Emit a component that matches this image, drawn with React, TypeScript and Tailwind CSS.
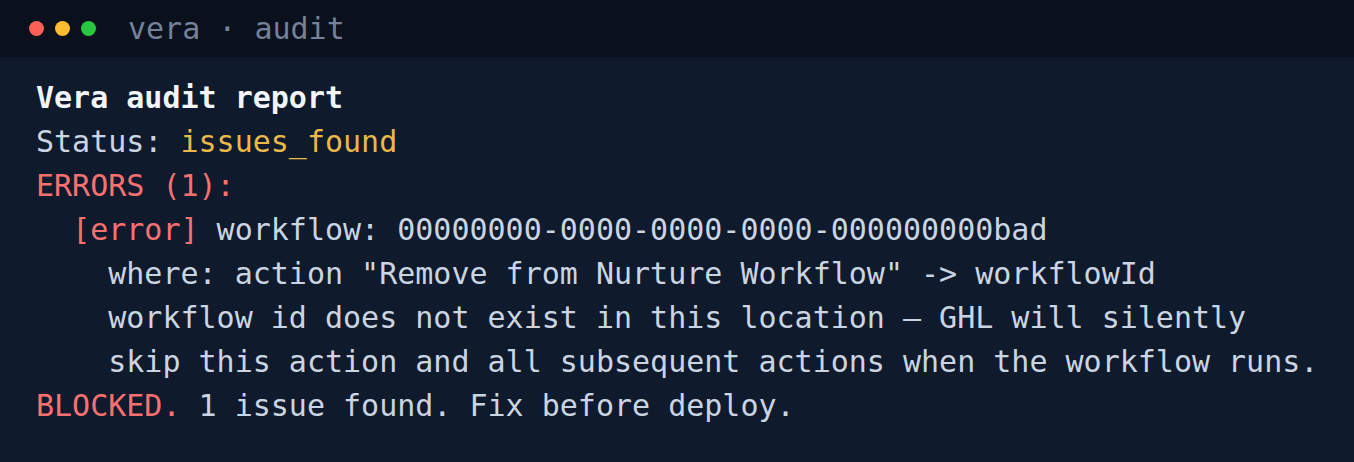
export default function App() {
  return (
    <div className="w-[1354px] h-[462px] bg-[#0f1a2d] flex flex-col font-['DejaVu_Sans_Mono',monospace] text-[30px]">
      <div className="h-[57px] bg-[#0a101c] flex items-center px-[29px]">
        <div className="flex gap-[11px]">
          <span className="w-[15px] h-[15px] rounded-full bg-[#ff5f57]" />
          <span className="w-[15px] h-[15px] rounded-full bg-[#febc2e]" />
          <span className="w-[15px] h-[15px] rounded-full bg-[#28c840]" />
        </div>
        <span className="ml-[32px] text-[#758198] leading-none">vera · audit</span>
      </div>
      <div className="pt-[19px] px-[36px] leading-[44px] text-[#cbd5e1] whitespace-pre">
        <div className="font-bold text-[#f1f5f9]">Vera audit report</div>
        <div>
          Status: <span className="text-[#e9b949]">issues_found</span>
        </div>
        <div className="text-[#f87171]">ERRORS (1):</div>
        <div>
          {"  "}
          <span className="text-[#f87171]">[error]</span> workflow: 00000000-0000-0000-0000-000000000bad
        </div>
        <div>{'    where: action "Remove from Nurture Workflow" -> workflowId'}</div>
        <div>{"    workflow id does not exist in this location — GHL will silently"}</div>
        <div>{"    skip this action and all subsequent actions when the workflow runs."}</div>
        <div>
          <span className="text-[#f87171]">BLOCKED.</span> 1 issue found. Fix before deploy.
        </div>
      </div>
    </div>
  );
}
